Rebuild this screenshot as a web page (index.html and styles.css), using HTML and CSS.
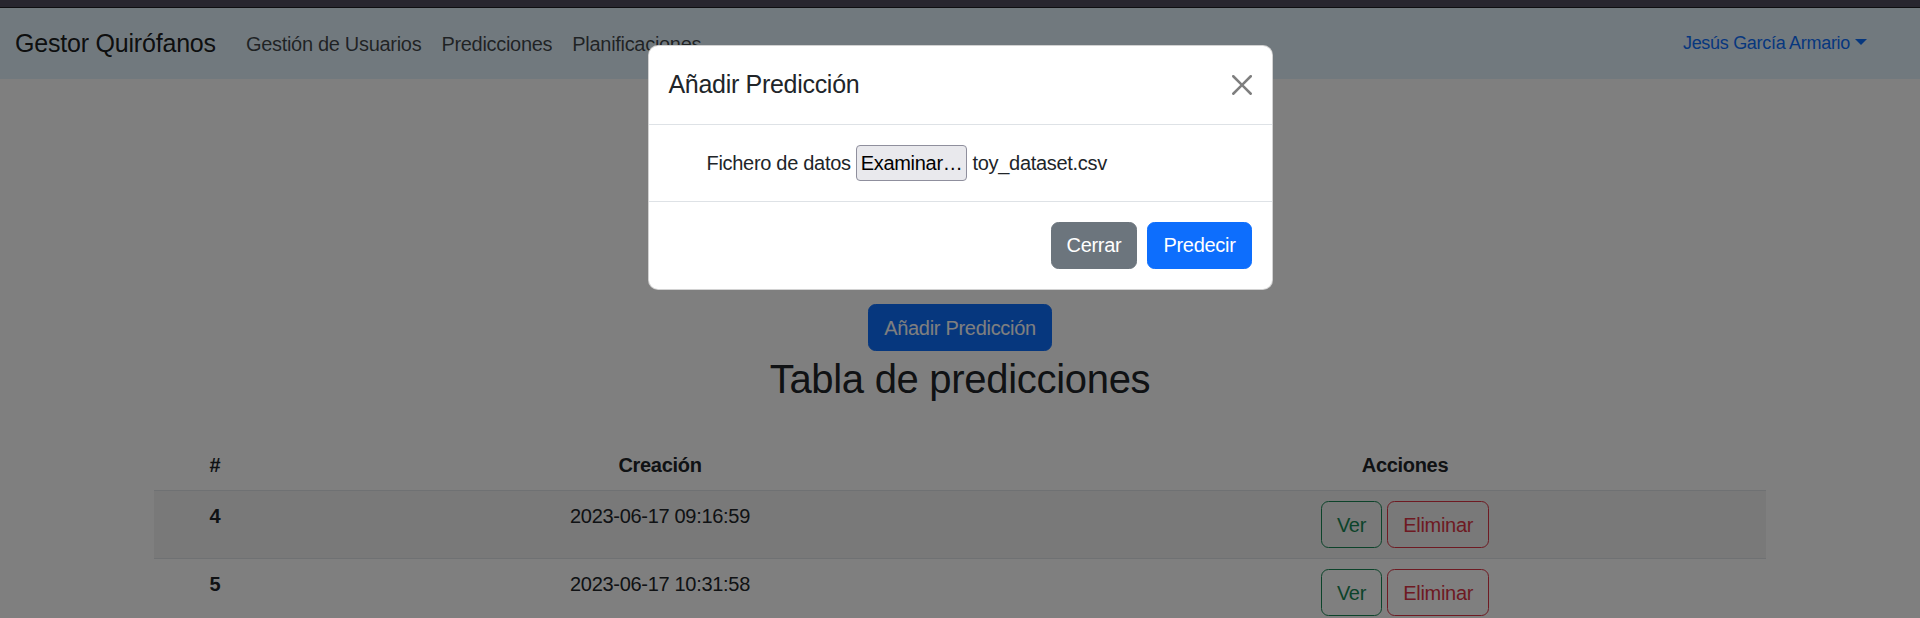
FILE: index.html
```html
<!DOCTYPE html>
<html lang="es">
<head>
<meta charset="utf-8">
<title>Gestor Quirófanos - Predicciones</title>
<link rel="stylesheet" href="styles.css">
</head>
<body>
<div class="chrome"></div>
<div class="viewport">
  <nav class="navbar">
    <a class="brand" href="#">Gestor Quirófanos</a>
    <ul class="nav-links">
      <li><a href="#">Gestión de Usuarios</a></li>
      <li><a href="#">Predicciones</a></li>
      <li><a href="#">Planificaciones</a></li>
    </ul>
    <a class="user" href="#">Jesús García Armario<span class="caret"></span></a>
  </nav>

  <main class="content">
    <div class="add-row"><button class="btn btn-primary" type="button">Añadir Predicción</button></div>
    <h2 class="title">Tabla de predicciones</h2>
    <table class="table">
      <colgroup><col class="c1"><col class="c2"><col class="c3"></colgroup>
      <thead>
        <tr><th>#</th><th>Creación</th><th>Acciones</th></tr>
      </thead>
      <tbody>
        <tr class="striped">
          <th>4</th>
          <td>2023-06-17 09:16:59</td>
          <td><button class="btn btn-outline-success" type="button">Ver</button> <button class="btn btn-outline-danger" type="button">Eliminar</button></td>
        </tr>
        <tr>
          <th>5</th>
          <td>2023-06-17 10:31:58</td>
          <td><button class="btn btn-outline-success" type="button">Ver</button> <button class="btn btn-outline-danger" type="button">Eliminar</button></td>
        </tr>
      </tbody>
    </table>
  </main>

  <div class="backdrop"></div>
  <div class="modal">
    <div class="modal-dialog">
      <div class="modal-header">
        <h5 class="modal-title">Añadir Predicción</h5>
        <button class="btn-close" type="button" aria-label="Cerrar">
          <svg viewBox="0 0 16 16" width="20" height="20"><path d="M.293.293a1 1 0 0 1 1.414 0L8 6.586 14.293.293a1 1 0 1 1 1.414 1.414L9.414 8l6.293 6.293a1 1 0 0 1-1.414 1.414L8 9.414l-6.293 6.293a1 1 0 0 1-1.414-1.414L6.586 8 .293 1.707a1 1 0 0 1 0-1.414z"/></svg>
        </button>
      </div>
      <div class="modal-body">
        <div class="file-row">
          <span class="file-label">Fichero de datos</span>
          <span class="file-btn">Examinar…</span>
          <span class="file-name">toy_dataset.csv</span>
        </div>
      </div>
      <div class="modal-footer">
        <button class="btn btn-secondary" type="button">Cerrar</button>
        <button class="btn btn-primary" type="button">Predecir</button>
      </div>
    </div>
  </div>
</div>
</body>
</html>
```

FILE: styles.css
```css
html {
  font-size: 20px;
}

* {
  box-sizing: border-box;
}

body {
  margin: 0;
  font-family: "Liberation Sans", Arial, sans-serif;
  font-size: 1rem;
  line-height: 1.5;
  letter-spacing: -0.015em;
  color: #212529;
  background: #fff;
}

.chrome {
  height: 8px;
  background: #28262f;
  border-bottom: 1px solid #0e0e11;
}

.viewport {
  position: relative;
  height: 610px;
  overflow: hidden;
}

/* Navbar */
.navbar {
  display: flex;
  align-items: center;
  background: #e3f2fd;
  padding: 10px 15px;
  height: 71px;
}

.brand {
  font-size: 1.25rem;
  line-height: 1.5;
  letter-spacing: -0.2px;
  padding: 6px 0;
  margin-right: 20px;
  color: rgba(0, 0, 0, 0.9);
  text-decoration: none;
}

.nav-links {
  display: flex;
  list-style: none;
  margin: 0;
  padding: 0;
}

.nav-links a {
  display: block;
  padding: 10px;
  color: rgba(0, 0, 0, 0.72);
  text-decoration: none;
}

.user {
  margin-left: auto;
  margin-right: 38px;
  padding: 10px 0;
  font-size: 18px;
  color: #0d6efd;
  text-decoration: none;
}

.caret {
  display: inline-block;
  margin-left: 5px;
  vertical-align: 4px;
  border-top: 6px solid;
  border-left: 6px solid transparent;
  border-right: 6px solid transparent;
}

/* Content */
.content {
  width: 1612px;
  margin: 0 auto;
  padding-top: 225px;
}

.add-row {
  text-align: center;
}

.title {
  margin: 4px 0 37px;
  font-size: 40px;
  font-weight: 400;
  line-height: 1.2;
  text-align: center;
}

.table {
  width: 100%;
  border-collapse: collapse;
  text-align: center;
}

.c1 { width: 122px; }
.c2 { width: 768px; }
.c3 { width: 722px; }

.table th,
.table td {
  padding: 10px;
  border-bottom: 1px solid #dee2e6;
  vertical-align: top;
}

.table th {
  font-weight: 700;
}

.table tr.striped > * {
  background: rgba(0, 0, 0, 0.05);
}

/* Buttons */
.btn {
  display: inline-block;
  font-family: inherit;
  font-size: 1rem;
  line-height: 1.5;
  letter-spacing: inherit;
  padding: 7.5px 15px;
  border: 1px solid transparent;
  border-radius: 7.5px;
  background: transparent;
  cursor: pointer;
}

.btn-primary {
  color: #fff;
  background: #0d6efd;
  border-color: #0d6efd;
}

.btn-secondary {
  color: #fff;
  background: #6c757d;
  border-color: #6c757d;
}

.btn-outline-success {
  color: #198754;
  border-color: #198754;
}

.btn-outline-danger {
  color: #dc3545;
  border-color: #dc3545;
}

/* Modal */
.backdrop {
  position: absolute;
  inset: 0;
  background: rgba(0, 0, 0, 0.5);
}

.modal {
  position: absolute;
  inset: 0;
}

.modal-dialog {
  width: 625px;
  margin: 37px auto 0;
  background: #fff;
  border: 1px solid rgba(0, 0, 0, 0.175);
  border-radius: 10px;
}

.modal-header {
  display: flex;
  align-items: center;
  padding: 20px;
  border-bottom: 1px solid #dee2e6;
}

.modal-title {
  margin: 0;
  font-size: 1.25rem;
  font-weight: 400;
  line-height: 1.5;
}

.btn-close {
  width: 30px;
  height: 30px;
  padding: 5px;
  margin: -10px -5px -10px auto;
  border: 0;
  background: transparent;
  opacity: 0.5;
  cursor: pointer;
}

.btn-close svg {
  display: block;
  fill: #000;
}

.modal-body {
  padding: 20px;
}

.file-row {
  display: flex;
  align-items: center;
  gap: 5px;
  padding-left: 38px;
  height: 36px;
}

.file-btn {
  padding: 2px 4px;
  line-height: 1.5;
  background: #e9e9ed;
  border: 1px solid #8f8f9d;
  border-radius: 4px;
  color: #000;
}

.modal-footer {
  display: flex;
  justify-content: flex-end;
  align-items: center;
  padding: 15px;
  border-top: 1px solid #dee2e6;
}

.modal-footer .btn {
  margin: 5px;
}
```
